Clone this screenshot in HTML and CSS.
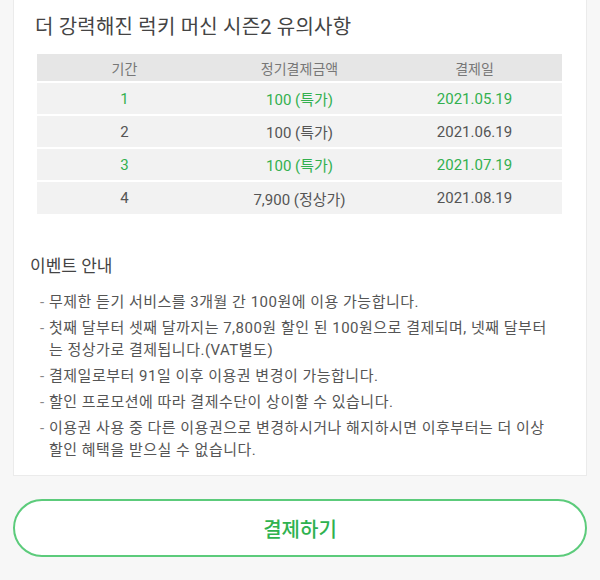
FILE: index.html
```html
<!DOCTYPE html>
<html lang="ko">
<head>
<meta charset="utf-8">
<link rel="stylesheet" href="styles.css">
</head>
<body>
<div class="card">
  <h1 class="title">더 강력해진 럭키 머신 시즌2 유의사항</h1>
  <table class="plan">
    <thead>
      <tr><th>기간</th><th>정기결제금액</th><th>결제일</th></tr>
    </thead>
    <tbody>
      <tr class="hl"><td>1</td><td>100 (특가)</td><td>2021.05.19</td></tr>
      <tr><td>2</td><td>100 (특가)</td><td>2021.06.19</td></tr>
      <tr class="hl"><td>3</td><td>100 (특가)</td><td>2021.07.19</td></tr>
      <tr><td>4</td><td>7,900 (정상가)</td><td>2021.08.19</td></tr>
    </tbody>
  </table>
  <h2 class="sub">이벤트 안내</h2>
  <ul class="notes">
    <li>무제한 듣기 서비스를 3개월 간 100원에 이용 가능합니다.</li>
    <li>첫째 달부터 셋째 달까지는 7,800원 할인 된 100원으로 결제되며, 넷째 달부터 는 정상가로 결제됩니다.(VAT별도)</li>
    <li>결제일로부터 91일 이후 이용권 변경이 가능합니다.</li>
    <li>할인 프로모션에 따라 결제수단이 상이할 수 있습니다.</li>
    <li>이용권 사용 중 다른 이용권으로 변경하시거나 해지하시면 이후부터는 더 이상 할인 혜택을 받으실 수 없습니다.</li>
  </ul>
</div>
<div class="actions">
  <button class="pay">결제하기</button>
</div>
</body>
</html>
```

FILE: styles.css
```css
* { box-sizing: border-box; }
body {
  margin: 0;
  background: #f7f7f7;
  font-family: Roboto, "Noto Sans CJK KR", sans-serif;
  color: #555;
}
.card {
  margin: 0 13px;
  background: #fff;
  border: 1px solid #ebebeb;
  border-top: none;
  padding: 13px 0 14px;
}
.title {
  margin: 0;
  padding-left: 21px;
  font-size: 20px;
  font-weight: 400;
  line-height: 28px;
  letter-spacing: 0.2px;
  color: #444;
}
.plan {
  margin: 13px 0 0 23px;
  width: 525px;
  border-collapse: collapse;
  table-layout: fixed;
}
.plan th {
  background: #e6e6e6;
  height: 28px;
  font-size: 14px;
  font-weight: 400;
  color: #777;
  padding: 0;
}
.plan td {
  background: #f2f2f2;
  height: 33px;
  border-top: 2px solid #fff;
  text-align: center;
  font-size: 15px;
  color: #555;
  padding: 0;
}
.plan tr.hl td { color: #33b04f; }
.sub {
  margin: 41px 0 0 0;
  padding-left: 16px;
  font-size: 17px;
  font-weight: 400;
  line-height: 22px;
  color: #444;
}
.notes {
  list-style: none;
  margin: 14px 0 0 0;
  padding: 0 0 0 35px;
  width: 540px;
}
.notes li {
  position: relative;
  font-size: 15px;
  line-height: 22px;
  letter-spacing: 0.5px;
  word-break: keep-all;
  color: #555;
  margin-top: 4px;
}
.notes li:first-child { margin-top: 0; }
.notes li::before {
  content: "-";
  position: absolute;
  left: -9px;
  top: 0;
  color: #888;
}
.actions {
  padding: 23px 13px 0;
}
.pay {
  display: block;
  width: 100%;
  height: 58px;
  background: #fff;
  border: 2px solid #5ccb7b;
  border-radius: 29px;
  font-family: Roboto, "Noto Sans CJK KR", sans-serif;
  font-size: 20px;
  font-weight: 500;
  color: #2fb24f;
  cursor: pointer;
}
```
